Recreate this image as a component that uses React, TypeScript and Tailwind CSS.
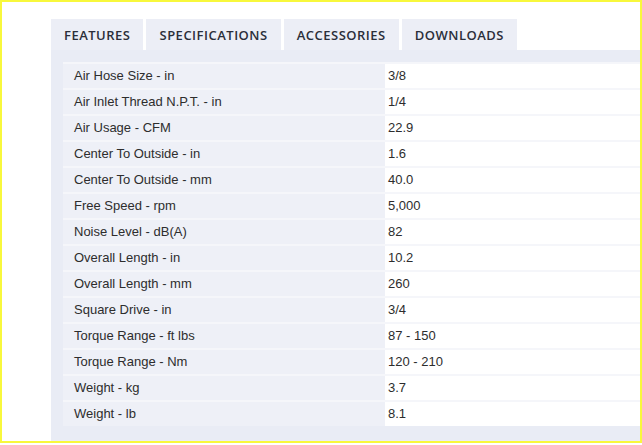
import React from "react";

const rows: [string, string][] = [
  ["Air Hose Size - in", "3/8"],
  ["Air Inlet Thread N.P.T. - in", "1/4"],
  ["Air Usage - CFM", "22.9"],
  ["Center To Outside - in", "1.6"],
  ["Center To Outside - mm", "40.0"],
  ["Free Speed - rpm", "5,000"],
  ["Noise Level - dB(A)", "82"],
  ["Overall Length - in", "10.2"],
  ["Overall Length - mm", "260"],
  ["Square Drive - in", "3/4"],
  ["Torque Range - ft lbs", "87 - 150"],
  ["Torque Range - Nm", "120 - 210"],
  ["Weight - kg", "3.7"],
  ["Weight - lb", "8.1"],
];

const tabs = ["FEATURES", "SPECIFICATIONS", "ACCESSORIES", "DOWNLOADS"];

export default function App() {
  return (
    <div className="w-[642px] h-[445px] bg-white">
      <div className="w-[642px] h-[443px] border-2 border-[#f8f83c] pl-[49px] pt-[17px] flex flex-col">
        <div className="flex gap-[3px] h-[31px]">
          {tabs.map((t) => (
            <div
              key={t}
              className="h-full px-[13px] pt-[2px] flex items-center bg-[#eceef6] text-[#2b2e3a] text-[13px] font-semibold tracking-[0.5px]"
              style={{ fontFamily: '"Open Sans", "Liberation Sans", sans-serif' }}
            >
              {t}
            </div>
          ))}
        </div>
        <div className="flex-1 bg-[#e9ecf5] pl-[12px] pt-[12px]">
          <div
            className="flex flex-col text-[13px] text-[#2d2d2d]"
            style={{ fontFamily: '"Liberation Sans", Arial, sans-serif' }}
          >
            {rows.map(([k, v]) => (
              <div key={k} className="flex h-[26px] border-t-2 border-[#f5f6fa]">
                <div className="w-[322px] bg-[#eef0f7] pl-[11px] flex items-center">{k}</div>
                <div className="flex-1 bg-white pl-[3px] flex items-center">{v}</div>
              </div>
            ))}
          </div>
        </div>
      </div>
    </div>
  );
}
